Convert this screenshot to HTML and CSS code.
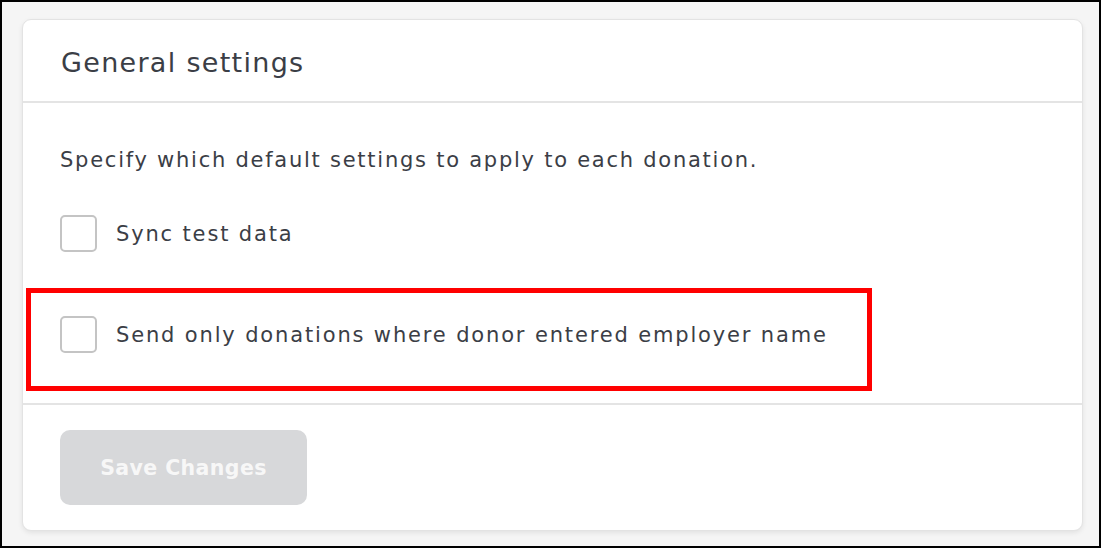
FILE: index.html
```html
<!DOCTYPE html>
<html>
<head>
<meta charset="utf-8">
<link rel="stylesheet" href="styles.css">
</head>
<body>
<div class="frame">
  <div class="card">
    <div class="card-header">
      <h2 class="title">General settings</h2>
    </div>
    <div class="card-body">
      <p class="intro">Specify which default settings to apply to each donation.</p>
      <label class="option">
        <span class="box"></span>
        <span class="label">Sync test data</span>
      </label>
      <label class="option option-second">
        <span class="box"></span>
        <span class="label">Send only donations where donor entered employer name</span>
      </label>
      <div class="highlight"></div>
    </div>
    <div class="card-footer">
      <button class="save" disabled>Save Changes</button>
    </div>
  </div>
</div>
</body>
</html>
```
FILE: styles.css
```css
html, body {
  margin: 0;
  padding: 0;
  background: #ffffff;
}
body {
  font-family: "DejaVu Sans", "Open Sans", sans-serif;
  color: #3b3e46;
}
.frame {
  border: 2px solid #000;
  background: #f5f5f5;
  padding: 17px 0 0 20px;
  box-sizing: content-box;
  width: 1077px;
  height: 527px;
}
.card {
  background: #fff;
  border: 1px solid #e3e3e3;
  border-radius: 9px;
  box-shadow: 0 2px 5px rgba(0,0,0,0.08);
  display: flex;
  flex-direction: column;
  box-sizing: border-box;
  width: 1061px;
  height: 512px;
}
.card-header {
  height: 83px;
  border-bottom: 2px solid #e4e4e4;
  box-sizing: border-box;
  padding-left: 38px;
  display: flex;
  align-items: center;
}
.title {
  margin: 0;
  font-size: 27px;
  font-weight: 400;
  letter-spacing: 1.3px;
  color: #3b3e46;
  line-height: 1;
  padding-top: 3px;
}
.card-body {
  position: relative;
  height: 302px;
  border-bottom: 2px solid #e4e4e4;
  box-sizing: border-box;
  padding: 43px 0 0 37px;
}
.intro {
  margin: 0;
  font-size: 21px;
  letter-spacing: 1.75px;
  line-height: 28px;
}
.option {
  display: flex;
  align-items: center;
  margin-top: 41px;
}
.option-second {
  margin-top: 64px;
}
.box {
  width: 33px;
  height: 33px;
  border: 2px solid #c4c4c4;
  border-radius: 5px;
  flex: none;
}
.label {
  margin-left: 19px;
  font-size: 21px;
  letter-spacing: 1.85px;
  padding-top: 1px;
}
.highlight {
  position: absolute;
  left: 3px;
  top: 185px;
  width: 836px;
  height: 93px;
  border: 5px solid #ff0000;
}
.card-footer {
  flex: 1;
  padding: 25px 0 0 37px;
}
.save {
  width: 247px;
  height: 75px;
  border: none;
  border-radius: 10px;
  background: #d7d8da;
  color: #f7f7f7;
  font-family: "DejaVu Sans", "Open Sans", sans-serif;
  font-size: 20.5px;
  font-weight: 700;
  letter-spacing: 0.4px;
  padding: 0;
}
```
